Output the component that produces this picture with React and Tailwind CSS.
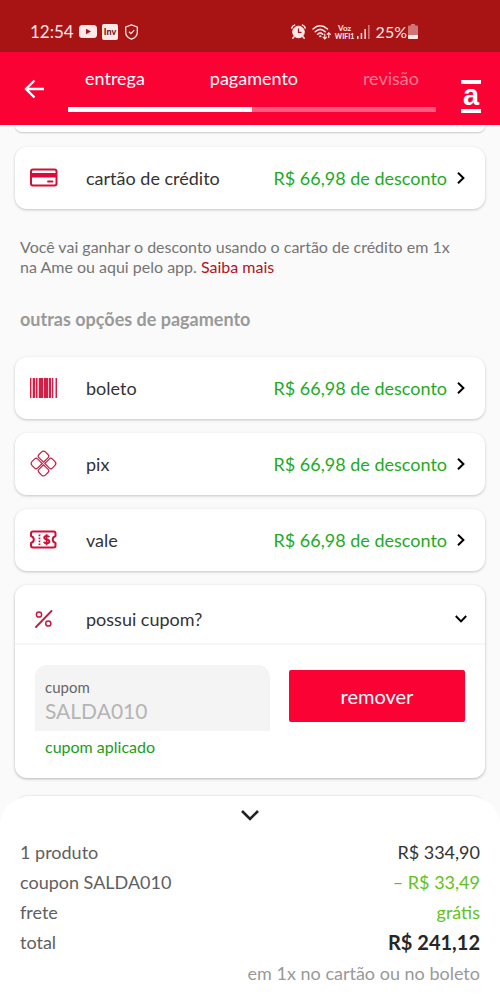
import { useState } from 'react';

const DISCOUNT = 'R$ 66,98 de desconto';

function CardIcon() {
  return (
    <svg className="w-7 h-5" viewBox="0 0 28 20" fill="none">
      <rect x="1" y="1.5" width="25.5" height="16" rx="2" stroke="#d0103a" strokeWidth="2" />
      <path d="M1 5h25.5v4.500H1z" fill="#e3063a" />
      <path d="M18 13.500h4.500" stroke="#d0103a" strokeWidth="1.800" strokeLinecap="round" />
    </svg>
  );
}

function BarcodeIcon() {
  return (
    <svg className="w-7 h-5" viewBox="0 0 28 20" fill="#d0204a">
      <path d="M0 0h1.300v20H0zM3 0h2.200v20H3zM6 0h1.500v20H6zM9 0h4v20H9zM14 0h4v20h-4zM19 0h2.200v20H19zM22 0h1.300v20H22zM25.500 0h1.500v20h-1.500z" />
      <path d="M1.300 0H3v20H1.300zM7.500 0H9v20H7.500zM13 0h1v20h-1zM18 0h1v20h-1z" opacity=".3" />
    </svg>
  );
}

function PixIcon() {
  // four rounded tiles turned by 45 degrees
  return (
    <svg className="w-7 h-7" viewBox="0 0 28 28" fill="none" stroke="#c41e45" strokeWidth="1.200">
      <g transform="translate(13.500 13.500) rotate(45)">
        <path d="M-.9-.9v-6.600q0-2-2-2h-3.600q-3 0-3 3v3.600q0 2 2 2z" />
        <path d="M.9-.9v-6.600q0-2 2-2h3.600q3 0 3 3v3.600q0 2-2 2z" />
        <path d="M-.9.9v6.600q0 2-2 2h-3.600q-3 0-3-3V2.900q0-2 2-2z" />
        <path d="M.9.9v6.600q0 2 2 2h3.600q3 0 3-3V2.900q0-2-2-2z" />
      </g>
    </svg>
  );
}

function VoucherIcon() {
  return (
    <svg className="w-7 h-5" viewBox="0 0 28 20" fill="none" stroke="#d0103a">
      <path d="M3 1.500h20.500q2 0 2 2V6q-2.800 1-2.800 3.500t2.800 3.500v2.500q0 2-2 2H3q-2 0-2-2V13q2.800-1 2.800-3.500T1 6V3.500q0-2 2-2z" strokeWidth="2" strokeLinejoin="round" />
      <path d="M9.500 4.500v10.500" strokeWidth="1.700" strokeDasharray="1.700 1.300" />
      <path d="M19.200 7.200q-.5-1.300-2.600-1.300-2.400 0-2.400 1.700 0 1.500 2.500 1.900 2.700.4 2.700 2.100 0 1.700-2.700 1.700-2.300 0-2.800-1.600M16.600 4.200v11" strokeWidth="1.900" />
    </svg>
  );
}

function PercentIcon() {
  return (
    <svg className="w-[18px] h-[18px]" viewBox="0 0 18 18" fill="none" stroke="#c8173f" strokeLinecap="round">
      <path d="M1 17 16.500 1" strokeWidth="1.800" />
      <circle cx="4" cy="4.500" r="2.600" strokeWidth="1.500" />
      <circle cx="13.300" cy="13.500" r="2.600" strokeWidth="1.500" />
    </svg>
  );
}

function Chevron({ className }) {
  return (
    <svg className={className} viewBox="0 0 12 12" fill="none" stroke="currentColor" strokeWidth="2">
      <path d="M3 .8 8.400 6 3 11.200" />
    </svg>
  );
}

function StatusBar() {
  return (
    <div className="h-[52px] bg-[#a81414] text-[#ffeaea] flex items-center justify-between pl-[30px] pr-[82px] pt-[11px]">
      <div className="flex items-center">
        <span className="text-[17px] w-[49px]">12:54</span>
        <svg className="w-[18px] h-[13px]" viewBox="0 0 18 13">
          <rect width="18" height="13" rx="3.500" fill="currentColor" />
          <path d="M7 3.700v5.600l5-2.800z" fill="#a81414" />
        </svg>
        <span className="ml-[5px] w-4 h-4 rounded-xs bg-[#ffeaea] text-[#7c1414] text-[9px] leading-4 font-black text-center">Inv</span>
        <svg className="ml-[7px] w-[13px] h-4" viewBox="0 0 13 16" fill="none" stroke="currentColor" strokeWidth="1.300" strokeLinejoin="round">
          <path d="M6.500.8 12.300 3v5.500q0 4.300-5.800 6.700Q.7 12.800.7 8.500V3z" />
          <path d="m4 7.700 1.900 1.900 3.300-3.500" />
        </svg>
      </div>
      <div className="flex items-center">
        <svg className="w-[15px] h-[15px]" viewBox="0 0 15 15" fill="none" stroke="currentColor">
          <circle cx="7.500" cy="8" r="5.800" fill="currentColor" />
          <path d="M.8 4q.5-2.200 2.700-2.900M14.200 4q-.5-2.200-2.700-2.900M3.200 12.500l-1.400 1.700M11.800 12.500l1.400 1.700" strokeWidth="1.500" strokeLinecap="round" />
          <path d="M7.500 4.600V8.400h3" stroke="#a81414" strokeWidth="1.300" />
        </svg>
        <svg className="ml-1.5 w-[19px] h-4" viewBox="0 0 19 16" fill="none" stroke="currentColor" strokeWidth="1.500" strokeLinecap="round">
          <path d="M1 5q7-6.500 14.500 0M3.200 7.700q5-4.700 10 0M5.600 10.300q2.700-2.400 5.200 0" />
          <circle cx="8.200" cy="12.300" r=".8" fill="currentColor" strokeWidth=".5" />
          <path d="M12.800 10v4.800m-1.700-1.600 1.700 1.700 1.700-1.700M16.800 13.500V8.800m-1.600 1.600 1.600-1.700 1.600 1.700" strokeWidth="1.100" />
        </svg>
        <span className="ml-1 w-[20px] flex flex-col items-center font-bold leading-2 text-[8px]">
          <span>Voz</span>
          <span className="text-[7px]">WIFI1</span>
        </span>
        <svg className="ml-0.5 w-[13px] h-[14px]" viewBox="0 0 13 14" fill="currentColor">
          <path d="M0 11h1.500v3H0zM3.700 8h1.500v6H3.700zM7.400 4h1.500v10H7.400z" />
          <path d="M11.100 0h1.500v14h-1.500z" opacity=".5" />
        </svg>
        <span className="ml-1.5 text-base">25%</span>
        <svg className="ml-px w-[10px] h-[15px]" viewBox="0 0 10 15" fill="currentColor">
          <path d="M3 0h4v1.500h2q1 0 1 1V11H0V2.500q0-1 1-1h2z" opacity=".45" />
          <path d="M0 11h10v3q0 1-1 1H1q-1 0-1-1z" />
        </svg>
      </div>
    </div>
  );
}

function Header() {
  return (
    <header className="h-[73px] bg-[#fb0234] text-white flex">
      <button aria-label="voltar" className="w-[68px] pl-6 flex items-center">
        <svg className="w-5 h-5" viewBox="0 0 20 20" fill="none" stroke="currentColor" strokeWidth="2.400">
          <path d="M20 10H2M10.500 1.500 2 10l8.500 8.500" />
        </svg>
      </button>
      <nav className="flex-1 pt-3.5">
        <div className="flex justify-between px-[17px] text-lg leading-6">
          <span>entrega</span>
          <span>pagamento</span>
          <span className="text-[#fe7a94]">revisão</span>
        </div>
        <div className="mt-[17px] h-[5px] bg-[#ff5c7d]">
          <div className="h-full w-1/2 bg-white" />
        </div>
      </nav>
      <div className="w-16 pl-[25px] pt-7">
        <div className="w-5 h-[33px] border-y-4 border-white font-['Liberation_Sans',sans-serif] font-bold text-[29px] leading-[23px] text-center">a</div>
      </div>
    </header>
  );
}

function PaymentOption({ icon, label }) {
  return (
    <button className="w-full h-[62px] pl-[15px] pr-[18px] flex items-center rounded-xl bg-white shadow-[0_1px_3px_rgba(0,0,0,0.22)] text-left text-lg">
      <span className="w-14 shrink-0">{icon}</span>
      <span className="text-[#333333]">{label}</span>
      <span className="ml-auto text-[#1faa1f]">{DISCOUNT}</span>
      <Chevron className="ml-2 w-3 h-3 text-black" />
    </button>
  );
}

function CouponCard() {
  const [open, setOpen] = useState(true);
  const [coupon, setCoupon] = useState('SALDA010');

  return (
    <section className="rounded-xl bg-white shadow-[0_1px_3px_rgba(0,0,0,0.28)]">
      <button
        onClick={() => setOpen(!open)}
        className="w-full h-[60px] pt-2.5 pl-5 pr-[18px] flex items-center border-b-2 border-[#f7f7f7] text-left text-lg text-[#333333]"
      >
        <span className="w-[51px] shrink-0"><PercentIcon /></span>
        <span>possui cupom?</span>
        <Chevron className="ml-auto w-3 h-3 text-black rotate-90" />
      </button>
      {open && (
        <div className="flex items-start gap-[19px] px-5 pt-5 pb-[17px]">
          <div className="flex-[4] min-w-0">
            <div className="h-[66px] rounded-t-xl bg-[#f4f4f4] px-2.5 pt-3">
              <label htmlFor="coupon" className="block text-[15px] leading-5 text-[#666666]">cupom</label>
              <input
                id="coupon"
                value={coupon}
                onChange={(e) => setCoupon(e.target.value)}
                className="block w-full bg-transparent outline-none text-[21px] leading-7 text-[#b4b4b4]"
              />
            </div>
            <p className="pl-2.5 pt-1 pb-0.5 text-base leading-6 text-[#1c9c1c]">cupom aplicado</p>
          </div>
          <button onClick={() => setCoupon('')} className="flex-[3] mt-[5px] h-[52px] rounded-xs bg-[#fb0234] text-white text-xl">
            remover
          </button>
        </div>
      )}
    </section>
  );
}

function Summary() {
  return (
    <footer className="relative flex-1 -mt-7 rounded-t-[28px] bg-white px-5 pb-3 text-[#606060]">
      <button aria-label="recolher resumo" className="flex mx-auto h-10 pb-1 items-center text-[#222222]">
        <svg className="w-[18px] h-3" viewBox="0 0 18 12" fill="none" stroke="currentColor" strokeWidth="2.600">
          <path d="m1 2 8 8 8-8" />
        </svg>
      </button>
      <dl className="text-lg leading-[30px]">
        <div className="flex justify-between">
          <dt>1 produto</dt>
          <dd className="text-[#333333]">R$ 334,90</dd>
        </div>
        <div className="flex justify-between">
          <dt>coupon SALDA010</dt>
          <dd className="text-[#62c21a]">– R$ 33,49</dd>
        </div>
        <div className="flex justify-between">
          <dt>frete</dt>
          <dd className="text-[#62c21a]">grátis</dd>
        </div>
        <div className="flex justify-between">
          <dt>total</dt>
          <dd className="text-xl leading-[30px] font-bold text-[#262626]">R$ 241,12</dd>
        </div>
      </dl>
      <p className="text-right text-lg leading-8 text-[#999999]">em 1x no cartão ou no boleto</p>
    </footer>
  );
}

export default function App() {
  return (
    <div className="min-h-screen flex flex-col bg-[#fafafa] font-[Lato,sans-serif]">
      <StatusBar />
      <Header />
      <main className="px-[15px]">
        <div className="h-[7px] rounded-b-xl bg-white shadow-[0_1px_2px_rgba(0,0,0,0.2)]" />
        <div className="pt-[15px]">
          <PaymentOption icon={<CardIcon />} label="cartão de crédito" />
        </div>
        <p className="pl-[5px] pr-6 pt-7 text-base leading-5 text-[#757575]">
          Você vai ganhar o desconto usando o cartão de crédito em 1x na Ame ou aqui pelo app.{' '}
          <a href="#saiba-mais" className="text-[#b3101f]">Saiba mais</a>
        </p>
        <h2 className="px-[5px] pt-[26px] pb-0.5 text-lg leading-8 font-bold text-[#999999]">outras opções de pagamento</h2>
        <div className="pt-5 pb-[18px] flex flex-col gap-3.5">
          <PaymentOption icon={<BarcodeIcon />} label="boleto" />
          <PaymentOption icon={<PixIcon />} label="pix" />
          <PaymentOption icon={<VoucherIcon />} label="vale" />
          <CouponCard />
        </div>
        <div className="h-[29px] rounded-t-xl bg-white shadow-[0_0_2px_rgba(0,0,0,0.2)]" />
      </main>
      <Summary />
    </div>
  );
}
